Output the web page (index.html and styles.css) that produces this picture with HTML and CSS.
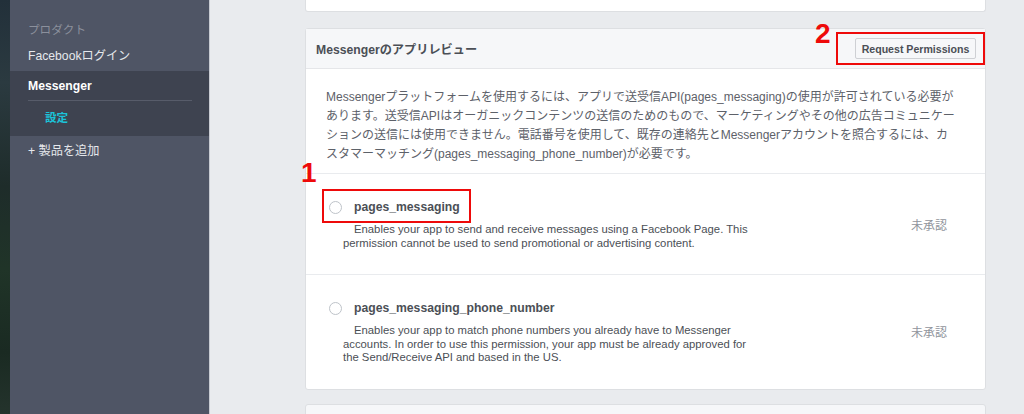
FILE: index.html
```html
<!DOCTYPE html>
<html lang="ja">
<head>
<meta charset="utf-8">
<title>Messenger設定</title>
<link rel="stylesheet" href="styles.css">
</head>
<body>
<div class="app">
  <div class="photo"></div>
  <nav class="sidebar">
    <div class="nav-label">プロダクト</div>
    <div class="nav-item">Facebookログイン</div>
    <div class="nav-group">
      <div class="nav-item strong">Messenger</div>
      <div class="nav-sep"></div>
      <div class="nav-sub">設定</div>
    </div>
    <div class="nav-item add">+ 製品を追加</div>
  </nav>
  <main class="main">
    <div class="card stub"></div>
    <section class="card review">
      <header class="card-head">
        <h2 class="card-title">Messengerのアプリレビュー</h2>
        <button class="btn">Request Permissions</button>
      </header>
      <p class="intro">Messengerプラットフォームを使用するには、アプリで送受信API(pages_messaging)の使用が許可されている必要があります。送受信APIはオーガニックコンテンツの送信のためのもので、マーケティングやその他の広告コミュニケーションの送信には使用できません。電話番号を使用して、既存の連絡先とMessengerアカウントを照合するには、カ<br>スタマーマッチング(pages_messaging_phone_number)が必要です。</p>
      <div class="perm">
        <div class="perm-main">
          <div class="perm-head">
            <span class="radio"></span>
            <span class="perm-name">pages_messaging</span>
          </div>
          <p class="perm-desc">Enables your app to send and receive messages using a Facebook Page. This permission cannot be used to send promotional or advertising content.</p>
        </div>
        <div class="perm-status">未承認</div>
      </div>
      <div class="perm">
        <div class="perm-main">
          <div class="perm-head">
            <span class="radio"></span>
            <span class="perm-name">pages_messaging_phone_number</span>
          </div>
          <p class="perm-desc">Enables your app to match phone numbers you already have to Messenger accounts. In order to use this permission, your app must be already approved for the Send/Receive API and based in the US.</p>
        </div>
        <div class="perm-status">未承認</div>
      </div>
      <span class="mark mark-2">2</span>
      <span class="hl hl-btn"></span>
      <span class="mark mark-1">1</span>
      <span class="hl hl-perm"></span>
    </section>
    <div class="card next"></div>
  </main>
</div>
</body>
</html>
```

FILE: styles.css
```css
* { box-sizing: border-box; }
html, body { margin: 0; padding: 0; }
body {
  font-family: "Liberation Sans", "Noto Sans CJK JP", sans-serif;
  font-size: 12.2px;
  color: #4b4f56;
  background: #e9ebee;
}
.app {
  display: flex;
  width: 1024px;
  height: 414px;
  overflow: hidden;
}
.photo {
  width: 10px;
  flex: none;
  background:
    linear-gradient(180deg, #22303a 0%, #2b3a40 20%, #1e2c2a 45%, #203428 65%, #1a2a22 85%, #24332c 100%);
}
.sidebar {
  width: 200px;
  flex: none;
  background: #4f5565;
  border-right: 1px solid #c8cbd2;
  padding-top: 20px;
}
.nav-label {
  padding-left: 18px;
  height: 20px;
  line-height: 20px;
  font-size: 11.6px;
  color: #8b909c;
}
.nav-item {
  padding-left: 18px;
  height: 20px;
  line-height: 20px;
  color: #e6e8ec;
  margin-top: 6px;
}
.nav-group {
  margin-top: 5px;
  background: #3e4350;
  padding: 5px 0 8px;
}
.nav-group .nav-item { margin-top: 0; }
.nav-item.strong { font-weight: bold; color: #ffffff; }
.nav-sep {
  height: 1px;
  background: #575c6a;
  margin: 4px 17px 0 18px;
}
.nav-sub {
  margin-top: 7px;
  padding-left: 35px;
  height: 20px;
  line-height: 20px;
  font-weight: bold;
  font-size: 11.6px;
  color: #1bc3d9;
}
.nav-item.add { margin-top: 5px; }

.main {
  flex: 1;
  padding-left: 95px;
}
.card {
  width: 681px;
  background: #ffffff;
  border: 1px solid #dddfe2;
  border-radius: 3px;
}
.stub {
  height: 12px;
  border-top: none;
  border-radius: 0 0 3px 3px;
}
.review {
  position: relative;
  margin-top: 16px;
}
.card-head {
  display: flex;
  align-items: center;
  justify-content: space-between;
  height: 40px;
  padding: 0 9px 0 10px;
  background: #f6f7f9;
  border-bottom: 1px solid #e5e6e9;
}
.card-title {
  margin: 0;
  font-size: 12.2px;
  font-weight: bold;
  color: #4b4f56;
}
.btn {
  font-family: "Liberation Sans", sans-serif;
  font-size: 10.6px;
  font-weight: bold;
  color: #4b4f56;
  background: #f6f7f9;
  border: 1px solid #ced0d4;
  border-radius: 2px;
  height: 21px;
  width: 121px;
  padding: 0;
}
.intro {
  margin: 0;
  padding: 19px 22px 9px 20px;
  font-size: 12px;
  line-height: 19px;
  color: #5d6169;
  border-bottom: 1px solid #e9ebee;
}
.perm {
  display: flex;
  align-items: center;
  padding: 24px 38px 24px 23px;
}
.perm + .perm { border-top: 1px solid #e9ebee; }
.perm-main { flex: 1; }
.perm-head {
  display: flex;
  align-items: center;
  gap: 12px;
  height: 18px;
}
.radio {
  width: 13px;
  height: 13px;
  border: 1px solid #bec3c9;
  border-radius: 50%;
  background: #fff;
  flex: none;
}
.perm-name {
  font-weight: bold;
  font-size: 12.2px;
  color: #4b4f56;
}
.perm-desc {
  margin: 7px 0 0 14px;
  width: 420px;
  font-size: 11.3px;
  line-height: 13.5px;
  text-indent: 11px;
  color: #4b4f56;
}
.perm-status {
  font-size: 12px;
  color: #90949c;
}
.next {
  margin-top: 14px;
  height: 40px;
  background: #f6f7f9;
}

.mark {
  position: absolute;
  font-family: "Liberation Sans", sans-serif;
  font-weight: bold;
  font-size: 28px;
  line-height: 28px;
  color: #ee0a0a;
}
.mark-2 { left: 509px; top: -9px; }
.mark-1 { left: -5px; top: 130px; }
.hl {
  position: absolute;
  border: 2px solid #ee0a0a;
}
.hl-btn { left: 530px; top: 3px; width: 149px; height: 33px; }
.hl-perm { left: 16px; top: 160px; width: 149px; height: 34px; }
```
